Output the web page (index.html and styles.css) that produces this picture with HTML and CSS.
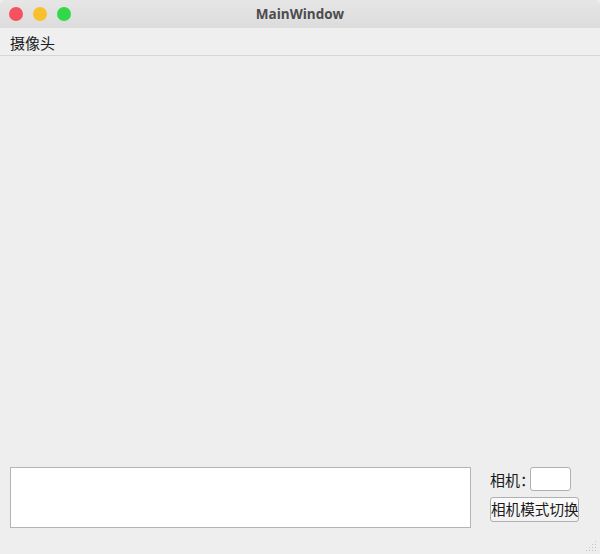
FILE: index.html
```html
<!DOCTYPE html>
<html>
<head>
<meta charset="utf-8">
<link rel="stylesheet" href="styles.css">
</head>
<body>
<div class="window">
  <div class="titlebar">
    <div class="lights">
      <span class="light red"></span>
      <span class="light yellow"></span>
      <span class="light green"></span>
    </div>
    <div class="title">MainWindow</div>
  </div>
  <div class="menubar"><span class="menu">摄像头</span></div>
  <div class="central">
    <div class="bottom">
      <div class="textbox"></div>
      <div class="side">
        <div class="camrow"><span class="label">相机：</span><span class="spin"></span></div>
        <button class="btn">相机模式切换</button>
      </div>
    </div>
    <svg class="grip" width="12" height="12" viewBox="0 0 12 12">
      <g fill="#c4c4c4">
        <rect x="9" y="1" width="1" height="1"/>
        <rect x="6" y="4" width="1" height="1"/><rect x="9" y="4" width="1" height="1"/>
        <rect x="3" y="7" width="1" height="1"/><rect x="6" y="7" width="1" height="1"/><rect x="9" y="7" width="1" height="1"/>
        <rect x="0" y="10" width="1" height="1"/><rect x="3" y="10" width="1" height="1"/><rect x="6" y="10" width="1" height="1"/><rect x="9" y="10" width="1" height="1"/>
      </g>
    </svg>
  </div>
</div>
</body>
</html>
```
FILE: styles.css
```css
html, body { margin: 0; padding: 0; }
body { width: 600px; height: 554px; overflow: hidden; background: #eeeeee; font-family: "Noto Sans CJK SC", "Noto Sans", sans-serif; }
.window { width: 600px; height: 554px; display: flex; flex-direction: column; }
.titlebar { height: 28px; flex: none; position: relative; background: linear-gradient(#e6e6e6, #dcdcdc); border-radius: 5px 5px 0 0; display: flex; align-items: center; justify-content: center; }
.lights { position: absolute; left: 9px; top: 7px; display: flex; gap: 10px; }
.light { width: 14px; height: 14px; border-radius: 50%; display: block; }
.red { background: #f5515f; }
.yellow { background: #fbbf2e; }
.green { background: #33d84a; }
.title { font-family: "Open Sans", "DejaVu Sans", sans-serif; font-weight: 700; font-size: 13.5px; color: #4c4c4c; letter-spacing: 0; }
.menubar { height: 28px; flex: none; background: #efefef; border-bottom: 1px solid #d6d6d6; box-sizing: border-box; display: flex; align-items: center; padding-left: 10px; padding-top: 2px; }
.menu { font-size: 15px; color: #1a1a1a; line-height: 1; }
.central { flex: 1; position: relative; display: flex; flex-direction: column; justify-content: flex-end; background: #eeeeee; }
.bottom { display: flex; padding: 0 0 26px 10px; }
.textbox { width: 459px; height: 59px; background: #fff; border: 1px solid #b4b4b4; }
.side { margin-left: 19px; display: flex; flex-direction: column; gap: 6px; }
.camrow { display: flex; align-items: center; height: 24px; }
.label { font-size: 15px; color: #1a1a1a; line-height: 1; width: 40px; flex: none; white-space: nowrap; overflow: visible; }
.spin { width: 39px; height: 22px; background: #fff; border: 1px solid #b0b0b0; border-radius: 3px; display: block; flex: none; position: relative; }
.btn { width: 89px; height: 25px; padding: 0; margin: 0; font-family: "Noto Sans CJK SC", sans-serif; font-size: 14.6px; color: #1a1a1a; background: linear-gradient(#fbfbfb, #f2f2f2); border: 1px solid #b0b0b0; border-radius: 3px; line-height: 1; white-space: nowrap; overflow: hidden; }
.grip { position: absolute; right: 2px; bottom: 2px; }
```
